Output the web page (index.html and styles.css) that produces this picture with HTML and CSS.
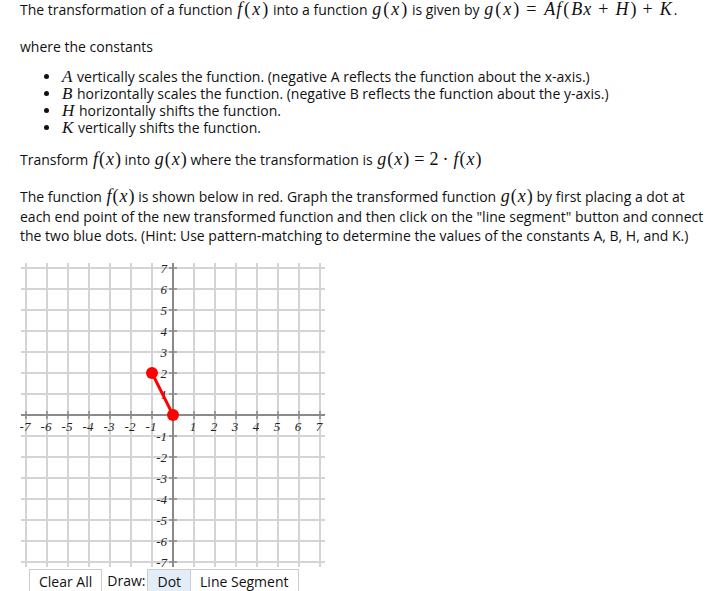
FILE: index.html
```html
<!DOCTYPE html>
<html>
<head>
<meta charset="utf-8">
<link rel="stylesheet" href="styles.css">
</head>
<body>
<div class="page">
  <p class="intro">The transformation of a function <span class="m"><i>f</i>(<i>x</i>)</span> into a function <span class="m"><i>g</i>(<i>x</i>)</span> is given by <span class="m"><i>g</i>(<i>x</i>)<span class="op">=</span><i>Af</i>(<i>Bx</i><span class="op2">+</span><i>H</i>)<span class="op2">+</span><i>K</i></span>.</p>
  <p class="where">where the constants</p>
  <ul class="consts">
    <li><span class="m"><i>A</i></span> vertically scales the function. (negative A reflects the function about the x-axis.)</li>
    <li><span class="m"><i>B</i></span> horizontally scales the function. (negative B reflects the function about the y-axis.)</li>
    <li><span class="m"><i>H</i></span> horizontally shifts the function.</li>
    <li><span class="m"><i>K</i></span> vertically shifts the function.</li>
  </ul>
  <p class="task">Transform <span class="m"><i>f</i>(<i>x</i>)</span> into <span class="m"><i>g</i>(<i>x</i>)</span> where the transformation is <span class="m"><i>g</i>(<i>x</i>)<span class="op">=</span>2<span class="op2">&middot;</span><i>f</i>(<i>x</i>)</span></p>
  <p class="instr">The function <span class="m"><i>f</i>(<i>x</i>)</span> is shown below in red. Graph the transformed function <span class="m"><i>g</i>(<i>x</i>)</span> by first placing a dot at<br>each end point of the new transformed function and then click on the "line segment" button and connect<br>the two blue dots. (Hint: Use pattern-matching to determine the values of the constants A, B, H, and K.)</p>

  <div class="graph">
    <svg width="306" height="308" viewBox="0 0 306 308" xmlns="http://www.w3.org/2000/svg">
      <g stroke="#d4d4d4" stroke-width="2">
        <line x1="1" y1="7" x2="305" y2="7"/>
        <line x1="1" y1="28" x2="305" y2="28"/>
        <line x1="1" y1="49" x2="305" y2="49"/>
        <line x1="1" y1="70" x2="305" y2="70"/>
        <line x1="1" y1="91" x2="305" y2="91"/>
        <line x1="1" y1="112" x2="305" y2="112"/>
        <line x1="1" y1="133" x2="305" y2="133"/>
        <line x1="1" y1="175" x2="305" y2="175"/>
        <line x1="1" y1="196" x2="305" y2="196"/>
        <line x1="1" y1="217" x2="305" y2="217"/>
        <line x1="1" y1="238" x2="305" y2="238"/>
        <line x1="1" y1="259" x2="305" y2="259"/>
        <line x1="1" y1="280" x2="305" y2="280"/>
        <line x1="1" y1="301" x2="305" y2="301"/>
        <line x1="6" y1="2" x2="6" y2="306"/>
        <line x1="27" y1="2" x2="27" y2="306"/>
        <line x1="48" y1="2" x2="48" y2="306"/>
        <line x1="69" y1="2" x2="69" y2="306"/>
        <line x1="90" y1="2" x2="90" y2="306"/>
        <line x1="111" y1="2" x2="111" y2="306"/>
        <line x1="132" y1="2" x2="132" y2="306"/>
        <line x1="174" y1="2" x2="174" y2="306"/>
        <line x1="195" y1="2" x2="195" y2="306"/>
        <line x1="216" y1="2" x2="216" y2="306"/>
        <line x1="237" y1="2" x2="237" y2="306"/>
        <line x1="258" y1="2" x2="258" y2="306"/>
        <line x1="279" y1="2" x2="279" y2="306"/>
        <line x1="300" y1="2" x2="300" y2="306"/>
      </g>
      <g stroke="#8a8a8a" stroke-width="2">
        <line x1="1" y1="154" x2="305" y2="154"/>
        <line x1="153" y1="2" x2="153" y2="306"/>
      </g>
      <g stroke="#8a8a8a" stroke-width="1.5">
        <path d="M6 150V158M27 150V158M48 150V158M69 150V158M90 150V158M111 150V158M132 150V158M174 150V158M195 150V158M216 150V158M237 150V158M258 150V158M279 150V158M300 150V158"/>
        <path d="M149 7H157M149 28H157M149 49H157M149 70H157M149 91H157M149 112H157M149 133H157M149 175H157M149 196H157M149 217H157M149 238H157M149 259H157M149 280H157M149 301H157"/>
      </g>
      <g class="lbl" text-anchor="middle">
        <text x="5" y="170">-7</text>
        <text x="26" y="170">-6</text>
        <text x="47" y="170">-5</text>
        <text x="68" y="170">-4</text>
        <text x="89" y="170">-3</text>
        <text x="110" y="170">-2</text>
        <text x="131" y="170">-1</text>
        <text x="173" y="170">1</text>
        <text x="194" y="170">2</text>
        <text x="215" y="170">3</text>
        <text x="236" y="170">4</text>
        <text x="257" y="170">5</text>
        <text x="278" y="170">6</text>
        <text x="299" y="170">7</text>
      </g>
      <g class="lbl" text-anchor="end">
        <text x="147" y="12">7</text>
        <text x="147" y="33">6</text>
        <text x="147" y="54">5</text>
        <text x="147" y="75">4</text>
        <text x="147" y="96">3</text>
        <text x="147" y="117">2</text>
        <text x="147" y="138">1</text>
        <text x="147" y="180">-1</text>
        <text x="147" y="201">-2</text>
        <text x="147" y="222">-3</text>
        <text x="147" y="243">-4</text>
        <text x="147" y="264">-5</text>
        <text x="147" y="285">-6</text>
        <text x="147" y="306">-7</text>
      </g>
      <line x1="132" y1="112" x2="153" y2="154" stroke="#ff0000" stroke-width="3"/>
      <circle cx="132" cy="112" r="6" fill="#ff0000"/>
      <circle cx="153" cy="154" r="6" fill="#ff0000"/>
    </svg>
  </div>

  <div class="toolbar">
    <button class="btn">Clear All</button>
    <span class="draw">Draw:</span>
    <div class="group">
      <button class="btn active">Dot</button>
      <button class="btn">Line Segment</button>
    </div>
  </div>
</div>
</body>
</html>
```

FILE: styles.css
```css
html, body {
  margin: 0;
  padding: 0;
  background: #ffffff;
}

.page {
  padding: 0 0 0 20px;
  font-family: "Open Sans", "Liberation Sans", sans-serif;
  font-size: 14px;
  color: #111111;
}

p {
  margin: 0;
}

.m {
  font-family: "Liberation Serif", "DejaVu Serif", serif;
  font-size: 18px;
  line-height: 1;
  white-space: nowrap;
}

.m i {
  font-style: italic;
  padding: 0 1px;
}

.op {
  padding: 0 5px;
}

.op2 {
  padding: 0 4px;
}

.intro {
  line-height: 20px;
}

.intro .m {
  letter-spacing: 1px;
}

.intro .op {
  padding: 0 6px;
}

.intro .op2 {
  padding: 0 5px;
}

.where {
  margin-top: 17px;
  line-height: 20px;
}

.consts {
  margin: 11px 0 0 0;
  padding-left: 41px;
  line-height: 17px;
}

.consts li {
  height: 17px;
}

.consts .m {
  font-size: 17px;
}

.task {
  margin-top: 14px;
  line-height: 20px;
}

.instr {
  margin-top: 17px;
  line-height: 19.5px;
}

.graph {
  margin-top: 15px;
  height: 308px;
}

.graph svg {
  display: block;
}

.lbl text {
  font-family: "Liberation Serif", serif;
  font-style: italic;
  font-size: 13px;
  fill: #222222;
}

.toolbar {
  display: flex;
  align-items: flex-start;
  margin-left: 9px;
}

.btn {
  font-family: "Open Sans", "Liberation Sans", sans-serif;
  font-size: 14px;
  color: #111111;
  background: #ffffff;
  border: 1px solid #cccccc;
  height: 26px;
  padding: 0 9px;
  margin: 0;
  border-radius: 0;
}

.draw {
  padding: 3px 2px 0 5px;
  line-height: 18px;
}

.group {
  display: flex;
}

.group .btn + .btn {
  border-left: none;
}

.active {
  background: #e3edf8;
}
```
